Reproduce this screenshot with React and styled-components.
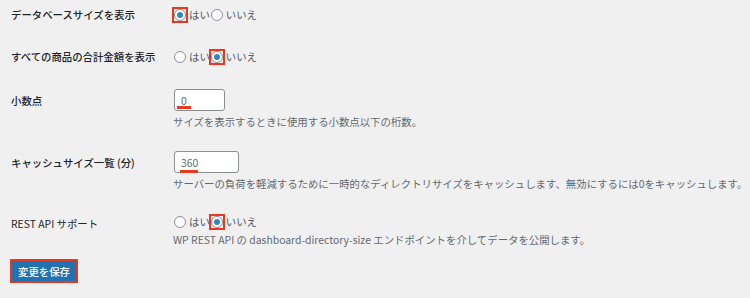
import React from "react";
import styled, { createGlobalStyle } from "styled-components";

const RED = "#e8381f";

const Global = createGlobalStyle`
  html, body { margin: 0; padding: 0; background: #f0f0f1; }
  body {
    font-family: "Noto Sans CJK JP", "Noto Sans", sans-serif;
    font-size: 10.4px;
    color: #3c434a;
  }
`;

const Page = styled.form`
  padding-left: 11px;
  width: 739px;
  height: 298px;
  box-sizing: border-box;
`;

const Row = styled.div`
  display: grid;
  grid-template-columns: 162px 1fr;
  padding-top: ${(p) => p.$pt}px;
`;

const Label = styled.div`
  height: ${(p) => p.$h}px;
  display: flex;
  align-items: center;
  padding-top: ${(p) => p.$shift || 0}px;
  font-weight: ${(p) => (p.$light ? 400 : 500)};
  color: #1d2327;
  white-space: nowrap;
`;

const Field = styled.div`
  display: flex;
  flex-direction: column;
  align-items: flex-start;
`;

const RadioGroup = styled.div`
  display: flex;
  align-items: center;
  height: 15px;
  line-height: 15px;
`;

const Option = styled.label`
  display: inline-flex;
  align-items: center;
  color: #50575e;
  white-space: nowrap;
`;

const Radio = styled.span`
  box-sizing: border-box;
  width: 12px;
  height: 12px;
  margin: 0 3px 0 1px;
  border-radius: 50%;
  border: 1px solid #8c8f94;
  background: #fff;
  display: inline-flex;
  align-items: center;
  justify-content: center;
  &::after {
    content: "";
    display: ${(p) => (p.$checked ? "block" : "none")};
    width: 6px;
    height: 6px;
    border-radius: 50%;
    background: #3582c4;
  }
`;

const Highlight = styled.span`
  display: inline-flex;
  border: 2px solid ${RED};
  margin: -2px 1px -2px -1px;
  & > span {
    margin: 0;
  }
`;

const InputWrap = styled.div`
  position: relative;
  margin-left: 1px;
`;

const TextInput = styled.input`
  box-sizing: border-box;
  width: ${(p) => p.$w}px;
  height: 22px;
  padding: 0 6px;
  border: 1px solid #8c8f94;
  border-radius: 3px;
  background: #fff;
  font-family: inherit;
  font-size: 10.4px;
  color: #646970;
  outline: none;
`;

const Underline = styled.span`
  position: absolute;
  height: 2.5px;
  background: ${RED};
  pointer-events: none;
`;

const Desc = styled.p`
  margin: 4px 0 0;
  line-height: 14px;
  color: #646970;
  white-space: nowrap;
`;

const Submit = styled.div`
  padding-top: 14px;
  padding-left: 1px;
`;

const Button = styled.button`
  box-sizing: border-box;
  height: 20px;
  width: 64px;
  padding: 0;
  border: none;
  border-radius: 0;
  background: #2271b1;
  color: #fff;
  font-family: inherit;
  font-size: 10.4px;
  font-weight: 500;
  outline: 2px solid ${RED};
  cursor: pointer;
`;

function RadioOption({ checked, highlight, children }) {
  const r = <Radio $checked={checked} />;
  return (
    <Option>
      {highlight ? <Highlight>{r}</Highlight> : r}
      {children}
    </Option>
  );
}

function YesNo({ value }) {
  return (
    <RadioGroup>
      <RadioOption checked={value === "yes"} highlight={value === "yes"}>はい</RadioOption>
      <RadioOption checked={value === "no"} highlight={value === "no"}>いいえ</RadioOption>
    </RadioGroup>
  );
}

export default function App() {
  return (
    <>
      <Global />
      <Page onSubmit={(e) => e.preventDefault()}>
        <Row $pt={7}>
          <Label $h={15}>データベースサイズを表示</Label>
          <Field>
            <YesNo value="yes" />
          </Field>
        </Row>
        <Row $pt={27}>
          <Label $h={15}>すべての商品の合計金額を表示</Label>
          <Field>
            <YesNo value="no" />
          </Field>
        </Row>
        <Row $pt={25}>
          <Label $h={22}>小数点</Label>
          <Field>
            <InputWrap>
              <TextInput $w={51} defaultValue="0" />
              <Underline style={{ left: 3, top: 17, width: 14 }} />
            </InputWrap>
            <Desc>サイズを表示するときに使用する小数点以下の桁数。</Desc>
          </Field>
        </Row>
        <Row $pt={22}>
          <Label $h={22}>キャッシュサイズ一覧 (分)</Label>
          <Field>
            <InputWrap>
              <TextInput $w={65} defaultValue="360" />
              <Underline style={{ left: 6, top: 19, width: 18 }} />
            </InputWrap>
            <Desc>サーバーの負荷を軽減するために一時的なディレクトリサイズをキャッシュします、無効にするには0をキャッシュします。</Desc>
          </Field>
        </Row>
        <Row $pt={23}>
          <Label $h={15} $shift={2} $light>REST API サポート</Label>
          <Field>
            <YesNo value="no" />
            <Desc>WP REST API の dashboard-directory-size エンドポイントを介してデータを公開します。</Desc>
          </Field>
        </Row>
        <Submit>
          <Button type="submit">変更を保存</Button>
        </Submit>
      </Page>
    </>
  );
}
